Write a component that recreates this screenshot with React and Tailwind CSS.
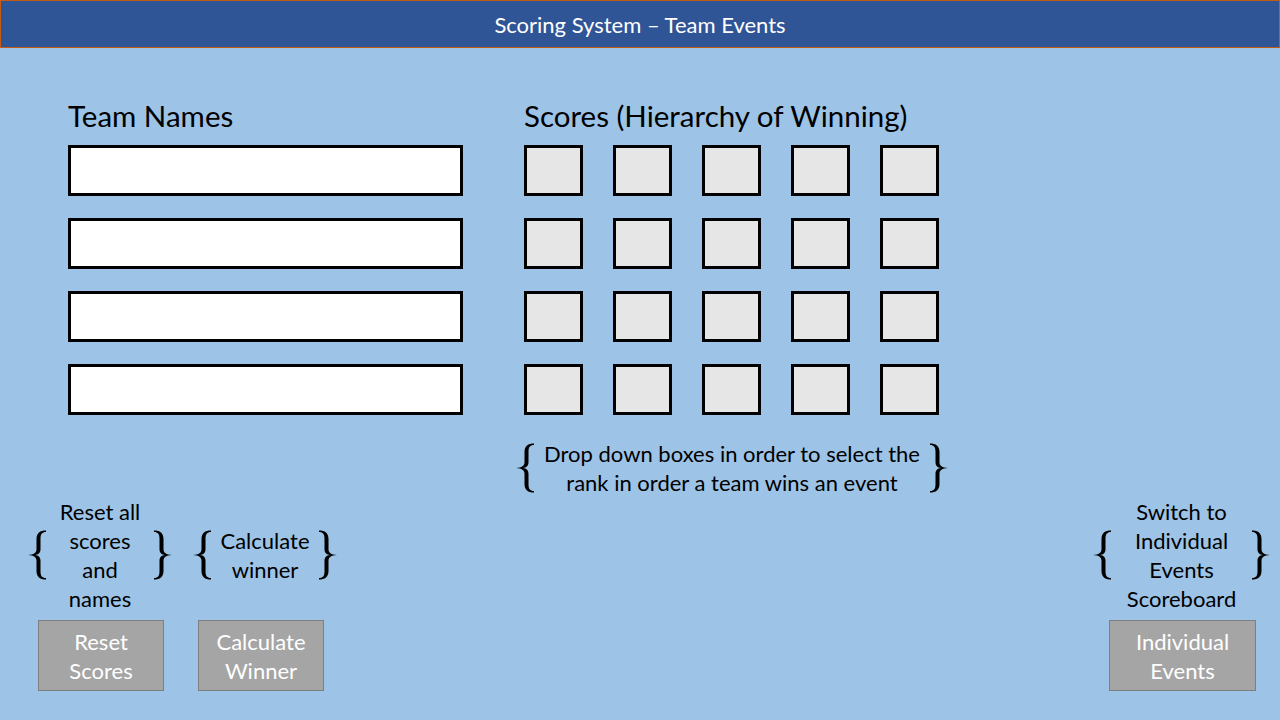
import React from 'react';

const FONT = { fontFamily: 'Lato, "Open Sans", sans-serif' };

function Brace({ flip = false }) {
  return (
    <svg width="19" height="50" viewBox="0 0 19 50" className={`shrink-0 ${flip ? '-scale-x-100' : ''}`}>
      <path
        d="M18 0.5 C12 0.5 8.5 3 8.5 9 L8.5 19 C8.5 23 6 24.5 0 25 C6 25.5 8.5 27 8.5 31 L8.5 41 C8.5 47 12 49.5 18 49.5 L18 48 C14 48 12.5 46 12.5 41 L12.5 31 C12.5 27 10.5 25.5 7 25 C10.5 24.5 12.5 23 12.5 19 L12.5 9 C12.5 4 14 2 18 2 Z"
        fill="#000"
      />
    </svg>
  );
}

function Note({ lines, className = '' }) {
  return (
    <div className={`flex items-center justify-between h-[116px] ${className}`}>
      <Brace />
      <div className="flex-1 text-center text-[22px] leading-[29px] text-black whitespace-nowrap">
        {lines.map(l => (
          <div key={l}>{l}</div>
        ))}
      </div>
      <Brace flip />
    </div>
  );
}

function GreyButton({ lines, className = '' }) {
  return (
    <div
      className={`h-[71px] bg-[#A5A5A5] border border-[#7F7F7F] flex flex-col items-center justify-center text-white text-[22px] leading-[29px] ${className}`}
    >
      {lines.map(l => (
        <div key={l}>{l}</div>
      ))}
    </div>
  );
}

export default function App() {
  const rows = [0, 1, 2, 3];
  const cols = [0, 1, 2, 3, 4];

  return (
    <div className="w-[1280px] h-[720px] bg-[#9DC3E6] flex flex-col overflow-hidden" style={FONT}>
      <div className="h-[48px] shrink-0 bg-[#2F5597] border border-[#C55A11] flex items-center justify-center text-white text-[22px]">
        Scoring System – Team Events
      </div>

      <div className="flex pl-[68px] pt-[50px]">
        <div className="w-[395px]">
          <div className="text-[29.5px] leading-[36px] h-[47px] text-black">Team Names</div>
          <div className="flex flex-col gap-[22px]">
            {rows.map(r => (
              <div key={r} className="h-[51px] bg-white border-[3px] border-black" />
            ))}
          </div>
        </div>

        <div className="ml-[61px] w-[416px] flex flex-col">
          <div className="text-[29.5px] leading-[36px] h-[47px] text-black whitespace-nowrap">Scores (Hierarchy of Winning)</div>
          <div className="flex flex-col gap-[22px]">
            {rows.map(r => (
              <div key={r} className="flex gap-[30px]">
                {cols.map(c => (
                  <div key={c} className="w-[59px] h-[51px] bg-[#E6E6E6] border-[3px] border-black" />
                ))}
              </div>
            ))}
          </div>
          <div className="mt-[24px] -mx-[12px] flex items-center justify-center">
            <Brace />
            <div className="px-[9px] text-center text-[22px] leading-[29px] text-black whitespace-nowrap">
              <div>Drop down boxes in order to select the</div>
              <div>rank in order a team wins an event</div>
            </div>
            <Brace flip />
          </div>
        </div>
      </div>

      <div className="mt-auto flex items-end justify-between pl-[28px] pr-[10px] pb-[33px]">
        <div className="flex gap-[21px]">
          <div className="w-[144px] flex flex-col">
            <Note lines={['Reset all', 'scores', 'and', 'names']} />
            <GreyButton lines={['Reset', 'Scores']} className="mt-[7px] ml-[10px] w-[126px]" />
          </div>
          <div className="w-[144px] flex flex-col">
            <Note lines={['Calculate', 'winner']} />
            <GreyButton lines={['Calculate', 'Winner']} className="mt-[7px] ml-[5px] w-[126px]" />
          </div>
        </div>

        <div className="w-[177px] flex flex-col">
          <Note lines={['Switch to', 'Individual', 'Events', 'Scoreboard']} className="-mb-[2px]" />
          <GreyButton lines={['Individual', 'Events']} className="mt-[9px] ml-[16px] w-[147px]" />
        </div>
      </div>
    </div>
  );
}
